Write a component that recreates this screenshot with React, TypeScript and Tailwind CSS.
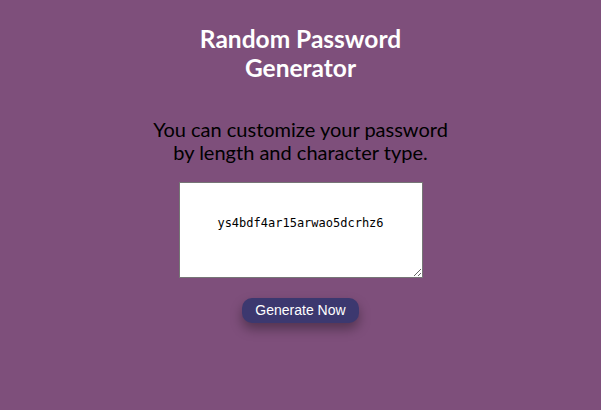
import React from "react";

export default function App() {
  return (
    <div className="min-h-[410px] w-full bg-[#7e4f7b] flex flex-col items-center font-['Lato',sans-serif]">
      <h1 className="mt-[24px] text-[24.5px] leading-[29px] font-bold text-white text-center w-[220px]">
        Random Password Generator
      </h1>
      <p className="mt-[36px] text-[20px] leading-[23px] text-black text-center w-[300px]">
        You can customize your password by length and character type.
      </p>
      <textarea
        readOnly
        value="ys4bdf4ar15arwao5dcrhz6"
        className="mt-[18px] w-[244px] h-[96px] bg-white border border-[#767676] text-center text-[12px] leading-[15px] text-black pt-[33px] outline-none font-['DejaVu_Sans_Mono',monospace]"
      />
      <button className="mt-[20px] w-[117px] h-[25px] rounded-[10px] bg-[#3c386f] text-white text-[14px] shadow-[0_6px_12px_rgba(0,0,0,0.35)] font-['Liberation_Sans',Arial,sans-serif]">
        Generate Now
      </button>
    </div>
  );
}
